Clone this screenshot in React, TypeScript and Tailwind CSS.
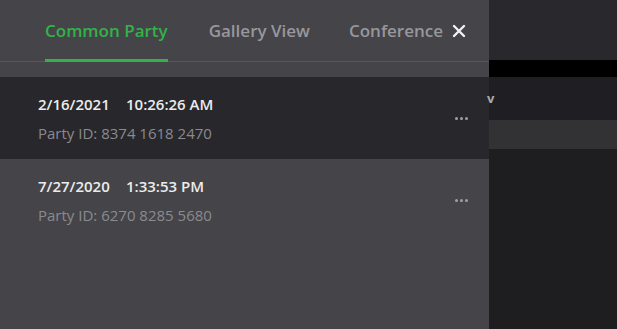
import React from "react";

function Dots() {
  return (
    <div className="flex gap-[2px]">
      <span className="w-[3px] h-[3px] rounded-full bg-[#a0a0a4]" />
      <span className="w-[3px] h-[3px] rounded-full bg-[#a0a0a4]" />
      <span className="w-[3px] h-[3px] rounded-full bg-[#a0a0a4]" />
    </div>
  );
}

function Row({ date, time, id, active }: { date: string; time: string; id: string; active?: boolean }) {
  return (
    <div className={`h-[82px] flex items-center pl-[38px] pr-[21px] ${active ? "bg-[#28272c]" : ""}`}>
      <div className="flex-1 flex flex-col">
        <div className="flex text-[15px] font-semibold text-[#ececec] leading-[20px]">
          <span className="w-[88px]">{date}</span>
          <span>{time}</span>
        </div>
        <div className="text-[15px] text-[#8b8a8f] leading-[20px] mt-[9px]">{id}</div>
      </div>
      <Dots />
    </div>
  );
}

export default function App() {
  return (
    <div className="w-[617px] h-[329px] flex bg-[#1e1e21] overflow-hidden" style={{ fontFamily: '"Open Sans", "Noto Sans", sans-serif' }}>
      <div className="w-[489px] h-full bg-[#454449] flex flex-col">
        <div className="h-[62px] flex items-stretch border-b border-[#58575c] pl-[45px]">
          <div className="relative flex items-center text-[17px] font-semibold text-[#33b249]">
            Common Party
            <div className="absolute left-0 right-0 bottom-[-1px] h-[3px] bg-[#33b249]" />
          </div>
          <div className="flex items-center ml-[41px] text-[17px] font-semibold text-[#98979b]">Gallery View</div>
          <div className="flex items-center ml-[39px] text-[17px] font-semibold text-[#98979b]">Conference</div>
          <div className="flex items-center ml-[9px]">
            <svg width="14" height="14" viewBox="0 0 14 14">
              <path d="M2 2 L12 12 M12 2 L2 12" stroke="#f2f2f2" strokeWidth="2.4" strokeLinecap="round" />
            </svg>
          </div>
        </div>
        <div className="h-[15px]" />
        <Row date="2/16/2021" time="10:26:26 AM" id="Party ID: 8374 1618 2470" active />
        <Row date="7/27/2020" time="1:33:53 PM" id="Party ID: 6270 8285 5680" />
      </div>
      <div className="flex-1 flex flex-col">
        <div className="h-[60px] bg-[#29282d]" />
        <div className="h-[17px] bg-black" />
        <div className="h-[43px] bg-[#1f1f23] flex items-center text-[13px] font-bold text-[#a9a9ad]">
          <span className="ml-[-2px]">v</span>
        </div>
        <div className="h-[29px] bg-[#323235]" />
        <div className="flex-1 bg-[#1e1e21]" />
      </div>
    </div>
  );
}
